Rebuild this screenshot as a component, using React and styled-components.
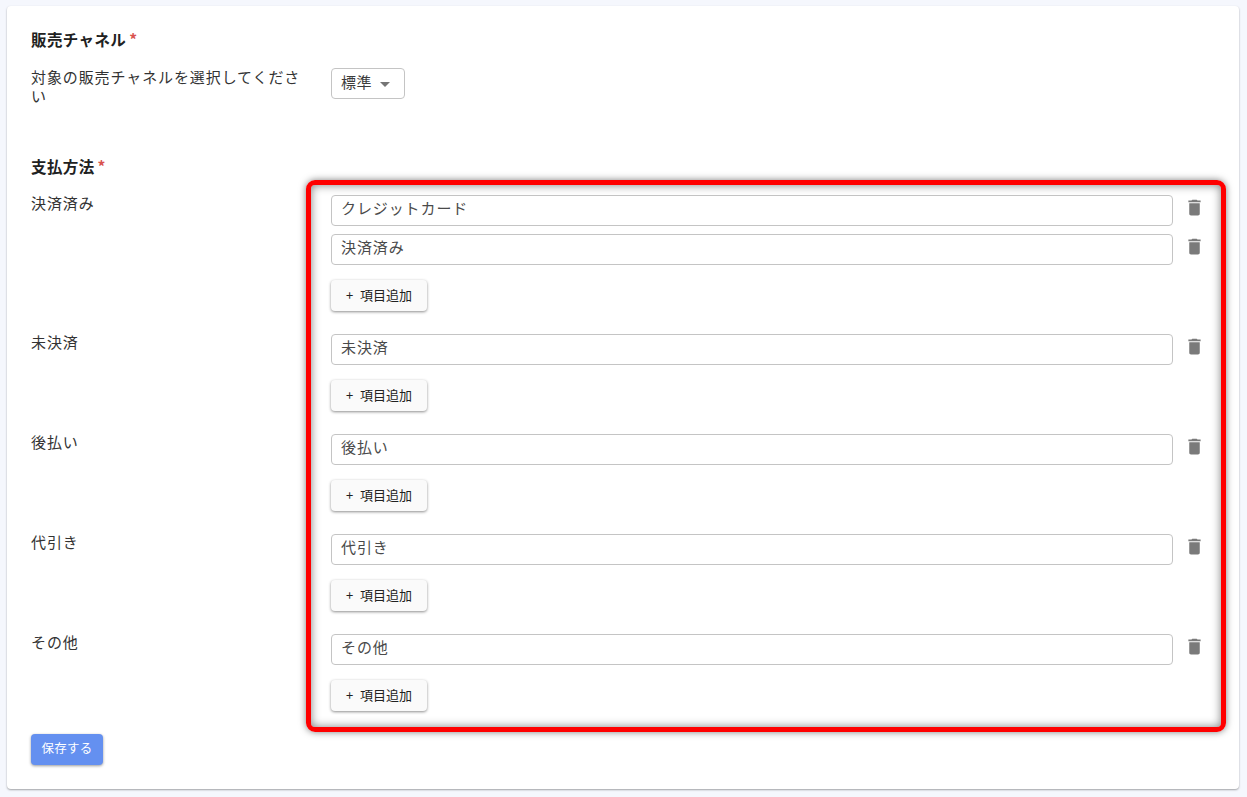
import React from 'react';
import styled, { createGlobalStyle } from 'styled-components';

const GlobalStyle = createGlobalStyle`
	html, body {
		margin: 0;
		background: #f5f7fd;
		font-family: "Noto Sans CJK JP", "Noto Sans", sans-serif;
		color: #212121;
	}
	* { box-sizing: border-box; }
`

const Page = styled.div`
	width: 1247px;
	height: 797px;
	padding: 6px 8px 8px 7px;
	overflow: hidden;
`

const Card = styled.div`
	position: relative;
	height: 783px;
	padding: 24px 24px 0;
	background: #fff;
	border-radius: 4px;
	box-shadow: 0 1px 2px rgba(0,0,0,.35);
`

const Heading = styled.div`
	display: flex;
	height: 20px;
	padding-bottom: 2px;
	align-items: center;
	font-size: 15.5px;
	font-weight: 700;
	letter-spacing: .4px;
	line-height: 18px;
`

const Required = styled.span`
	color: #d9534f;
	margin-left: 3px;
	margin-top: -1px;
`

const Row = styled.div`
	display: flex;
	margin-top: ${p => p.$top || 0}px;
`

const Label = styled.div`
	width: 300px;
	flex: none;
	margin-top: -2px;
	padding-right: 24px;
	font-size: 15px;
	font-weight: 400;
	letter-spacing: .9px;
	line-height: 19px;
	color: #333;
`

const Select = styled.div`
	display: flex;
	align-items: center;
	width: 74px;
	height: 31px;
	margin-top: -1px;
	padding: 0 0 5px 9px;
	border: 1px solid #c4c4c4;
	border-radius: 4px;
	font-size: 15px;
	letter-spacing: .4px;
	color: #3c3c3c;
`

const Caret = styled.span`
	width: 0;
	height: 0;
	margin-left: 8px;
	margin-top: 6px;
	border-left: 5px solid transparent;
	border-right: 5px solid transparent;
	border-top: 5px solid #757575;
`

const Fields = styled.div`
	display: flex;
	flex-direction: column;
	gap: 8px;
	flex: 1;
	padding-bottom: 23px;
`

const FieldRow = styled.div`
	display: flex;
	align-items: center;
`

const Field = styled.div`
	width: 842px;
	height: 31px;
	padding-left: 9px;
	border: 1px solid #c4c4c4;
	border-radius: 4px;
	font-size: 15px;
	letter-spacing: .9px;
	line-height: 24px;
	color: #4a4a4a;
`

const Trash = styled.svg`
	width: 21px;
	height: 21px;
	margin-left: 11px;
	margin-top: -7px;
	fill: #7a7a7a;
`

const AddButton = styled.button`
	display: block;
	width: 96px;
	height: 31px;
	margin-top: 7px;
	padding: 0 0 2px;
	border: 0;
	border-radius: 4px;
	background: #fafafa;
	box-shadow: 0 1px 3px rgba(0,0,0,.45);
	font-family: inherit;
	font-size: 13px;
	word-spacing: 4px;
	color: #212121;
`

const SaveButton = styled.button`
	display: block;
	width: 72px;
	height: 31px;
	padding: 0 0 5px;
	border: 0;
	border-radius: 4px;
	background: #6490f0;
	box-shadow: 0 1px 3px rgba(0,0,0,.4);
	font-family: inherit;
	font-size: 12.5px;
	font-weight: 400;
	letter-spacing: .3px;
	color: #fff;
`

// annotation drawn over the form
const Highlight = styled.div`
	position: absolute;
	left: 299px;
	top: 174px;
	width: 920px;
	height: 552px;
	border: 5px solid #f00;
	border-radius: 9px;
	box-shadow: 0 0 7px rgba(0,0,0,.5), inset 0 0 10px rgba(0,0,0,.5);
	pointer-events: none;
`

const groups = [
	{ label: '決済済み', fields: ['クレジットカード', '決済済み'] },
	{ label: '未決済', fields: ['未決済'] },
	{ label: '後払い', fields: ['後払い'] },
	{ label: '代引き', fields: ['代引き'] },
	{ label: 'その他', fields: ['その他'] },
]

const TrashIcon = () => (
	<Trash viewBox="0 0 24 24">
		<path d="M6 19c0 1.1.9 2 2 2h8c1.1 0 2-.9 2-2V7H6v12zM19 4h-3.5l-1-1h-5l-1 1H5v2h14V4z" />
	</Trash>
)

const App = () => (
	<Page>
		<GlobalStyle />
		<Card>
			<Heading>販売チャネル<Required>*</Required></Heading>
			<Row $top={19}>
				<Label>対象の販売チャネルを選択してください</Label>
				<Select>標準<Caret /></Select>
			</Row>
			<Row $top={52}>
				<Heading>支払方法<Required>*</Required></Heading>
			</Row>
			{groups.map((group, i) => (
				<Row key={i} $top={i === 0 ? 18 : 0}>
					<Label>{group.label}</Label>
					<Fields>
						{group.fields.map((name, j) => (
							<FieldRow key={j}>
								<Field>{name}</Field>
								<TrashIcon />
							</FieldRow>
						))}
						<AddButton>+ 項目追加</AddButton>
					</Fields>
				</Row>
			))}
			<SaveButton>保存する</SaveButton>
			<Highlight />
		</Card>
	</Page>
)

export default App;
